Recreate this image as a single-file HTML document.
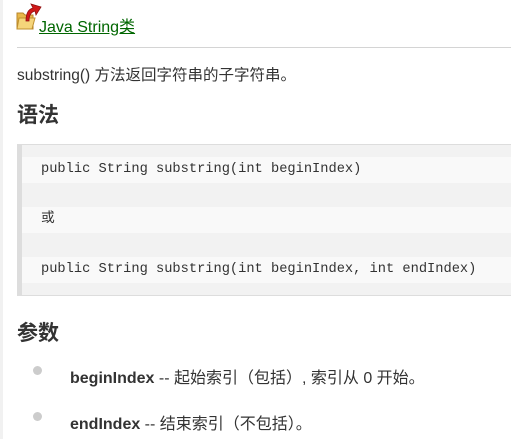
<!DOCTYPE html>
<html><head><meta charset="utf-8"><style>
body{margin:0;width:511px;height:439px;overflow:hidden;background:#fff;font-family:"Liberation Sans","Noto Sans CJK SC",sans-serif;color:#333;position:relative}
.lb{position:absolute;left:0;top:0;width:3px;height:439px;background:#f1f1f1}
.a{position:absolute;left:39px;top:13px;font-size:16px;color:#006600;text-decoration:underline}
.hr{position:absolute;left:17px;right:0;top:47px;height:1px;background:#d4d4d4}
.p{position:absolute;left:17px;top:63px;font-size:15.5px}
h2{position:absolute;left:17px;margin:0;font-size:21px;font-weight:bold;color:#333}
.code{position:absolute;left:17px;top:144px;width:493px;height:150px;border:1px solid #ddd;border-left:5px solid #ddd;background:#f2f2f2;box-sizing:content-box}
.ln{position:absolute;left:0;right:0;height:26px;background:#f9f9f9;font-family:"Liberation Mono","Noto Sans CJK SC",monospace;font-size:13.7px;line-height:26px;padding-left:19px;color:#333}
.li{position:absolute;left:70px;font-size:16px}
.dot{position:absolute;left:33px;width:9px;height:9px;border-radius:50%;background:#ccc}
</style></head><body>
<div class="lb"></div>
<svg style="position:absolute;left:16px;top:1px" width="26" height="30" viewBox="0 0 26 30">
<path d="M1 12 h6 l2 2 h8 v14 h-16z" fill="#e8b84a" stroke="#b8862a" stroke-width="1"/>
<path d="M3 17 h16 l-3 11 h-15z" fill="#f5d57a" stroke="#c0902e" stroke-width="1"/>
<path d="M10 20 C10 12 13 8 17 7 L15 3 L25 6 L20 14 L19 10 C15 11 13 15 13 20z" fill="#d01818" stroke="#901010" stroke-width="0.8"/>
</svg>
<div class="a">Java String类</div>
<div class="hr"></div>
<div class="p">substring() 方法返回字符串的子字符串。</div>
<h2 style="top:99px">语法</h2>
<div class="code">
<div class="ln" style="top:12px">public String substring(int beginIndex)</div>
<div class="ln" style="top:62px">或</div>
<div class="ln" style="top:112px">public String substring(int beginIndex, int endIndex)</div>
</div>
<h2 style="top:317px">参数</h2>
<div class="dot" style="top:366px"></div>
<div class="li" style="top:364px"><b>beginIndex</b> -- 起始索引（包括）, 索引从 0 开始。</div>
<div class="dot" style="top:412px"></div>
<div class="li" style="top:410px"><b>endIndex</b> -- 结束索引（不包括）。</div>
</body></html>
